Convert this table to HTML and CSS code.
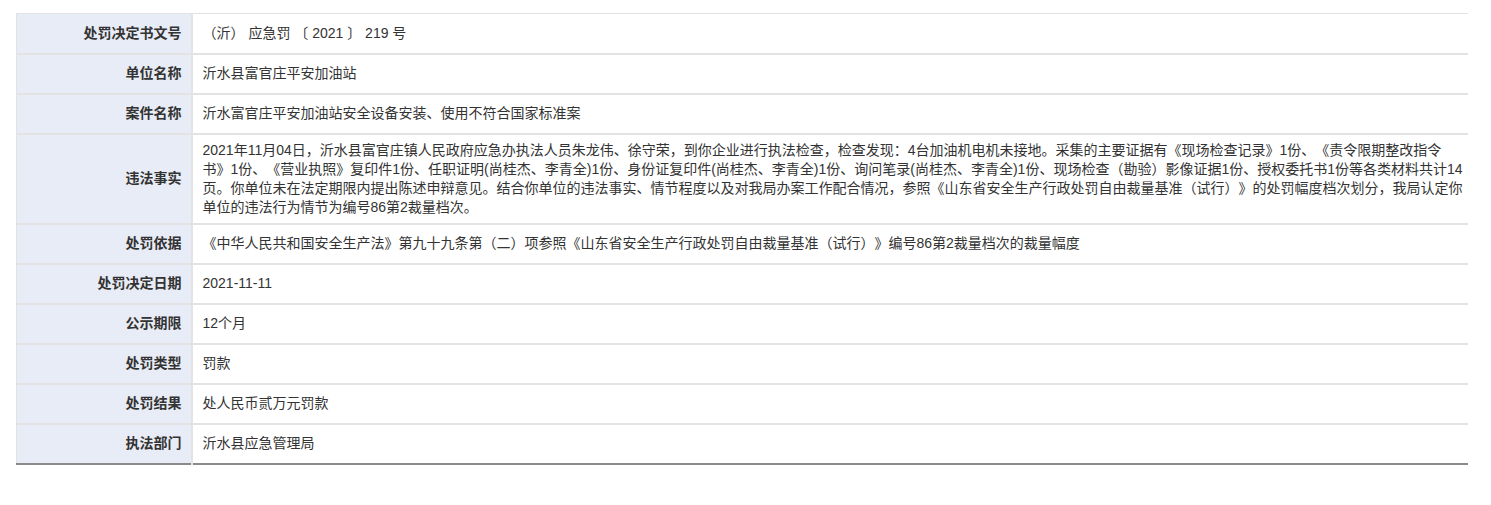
FILE: index.html
```html
<!DOCTYPE html>
<html lang="zh-CN">
<head>
    <meta charset="UTF-8">
    <meta name="viewport" content="width=device-width, initial-scale=1.0">
    <title>行政处罚信息</title>
    <link rel="stylesheet" href="styles.css">
</head>
<body>
    <div class="detail-wrap">
        <table class="detail-table">
            <tbody>
                <tr>
                    <th>处罚决定书文号</th>
                    <td>（沂） 应急罚 〔 2021 〕 219 号</td>
                </tr>
                <tr>
                    <th>单位名称</th>
                    <td>沂水县富官庄平安加油站</td>
                </tr>
                <tr>
                    <th>案件名称</th>
                    <td>沂水富官庄平安加油站安全设备安装、使用不符合国家标准案</td>
                </tr>
                <tr>
                    <th>违法事实</th>
                    <td>2021年11月04日，沂水县富官庄镇人民政府应急办执法人员朱龙伟、徐守荣，到你企业进行执法检查，检查发现：4台加油机电机未接地。采集的主要证据有《现场检查记录》1份、《责令限期整改指令书》1份、《营业执照》复印件1份、任职证明(尚桂杰、李青全)1份、身份证复印件(尚桂杰、李青全)1份、询问笔录(尚桂杰、李青全)1份、现场检查（勘验）影像证据1份、授权委托书1份等各类材料共计14页。你单位未在法定期限内提出陈述申辩意见。结合你单位的违法事实、情节程度以及对我局办案工作配合情况，参照《山东省安全生产行政处罚自由裁量基准（试行）》的处罚幅度档次划分，我局认定你单位的违法行为情节为编号86第2裁量档次。</td>
                </tr>
                <tr>
                    <th>处罚依据</th>
                    <td>《中华人民共和国安全生产法》第九十九条第（二）项参照《山东省安全生产行政处罚自由裁量基准（试行）》编号86第2裁量档次的裁量幅度</td>
                </tr>
                <tr>
                    <th>处罚决定日期</th>
                    <td>2021-11-11</td>
                </tr>
                <tr>
                    <th>公示期限</th>
                    <td>12个月</td>
                </tr>
                <tr>
                    <th>处罚类型</th>
                    <td>罚款</td>
                </tr>
                <tr>
                    <th>处罚结果</th>
                    <td>处人民币贰万元罚款</td>
                </tr>
                <tr>
                    <th>执法部门</th>
                    <td>沂水县应急管理局</td>
                </tr>
            </tbody>
        </table>
    </div>
</body>
</html>
```
FILE: styles.css
```css
body {
    margin: 0;
    padding: 0;
    background-color: #fff;
    font-family: "Liberation Sans", "Noto Sans CJK SC", sans-serif;
    font-size: 14px;
    color: #333;
    text-spacing-trim: space-all; /* keep CJK punctuation full width */
    font-feature-settings: "chws" 0, "halt" 0;
}
.detail-wrap {
    padding: 13px 23px 0 16px;
}
.detail-table {
    width: 100%;
    border-collapse: collapse;
    border-top: 1px solid #e2e2e2;
    border-left: 1px solid #e2e2e2;
    border-bottom: 2px solid #8a8a8a;
}
.detail-table th,
.detail-table td {
    box-sizing: border-box;
    height: 40px;
    padding: 6px 10px;
    line-height: 19px;
    vertical-align: middle;
    border-bottom: 2px solid #e3e3e3;
}
.detail-table tr:last-child th,
.detail-table tr:last-child td {
    border-bottom: 1px solid #e3e3e3;
}
.detail-table th {
    width: 175px;
    background-color: #e8ecf6;
    border-right: 2px solid #e3e3e3;
    text-align: right;
    font-weight: bold;
    padding-right: 9px;
}
.detail-table td {
    text-align: left;
    padding-right: 1px;
}
```
